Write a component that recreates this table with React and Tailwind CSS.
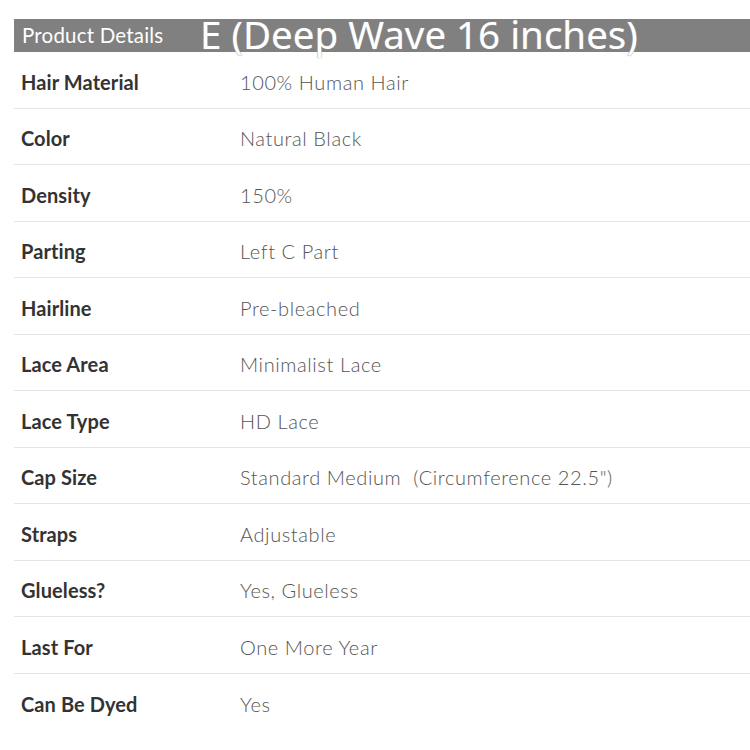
const rows = [
  ["Hair Material", "100% Human Hair"],
  ["Color", "Natural Black"],
  ["Density", "150%"],
  ["Parting", "Left C Part"],
  ["Hairline", "Pre-bleached"],
  ["Lace Area", "Minimalist Lace"],
  ["Lace Type", "HD Lace"],
  ["Cap Size", "Standard Medium\u00a0\u00a0(Circumference 22.5\")"],
  ["Straps", "Adjustable"],
  ["Glueless?", "Yes, Glueless"],
  ["Last For", "One More Year"],
  ["Can Be Dyed", "Yes"],
];

export default function App() {
  return (
    <div className="w-[750px] h-[750px] overflow-hidden bg-white pt-[19px] pl-[14px] font-['Lato',sans-serif]">
      <div className="flex h-[33px] items-center bg-[#808080] text-white">
        <span className="w-[186px] pl-[8px] text-[20.5px] tracking-[0.2px]">Product Details</span>
        <span className="-mt-[3px] whitespace-nowrap font-['Noto_Sans',sans-serif] text-[38.5px] leading-none [text-shadow:0_0_1px_#9a9a9a,0_0_1px_#9a9a9a]">
          E (Deep Wave 16 inches)
        </span>
      </div>
      <div>
        {rows.map(([label, value], i) => (
          <div
            key={label}
            className={`flex h-[56.5px] items-center pt-[4px] ${i < rows.length - 1 ? "border-b border-[#e6e6e6]" : ""}`}
          >
            <span className="w-[226px] pl-[7px] text-[20px] font-bold text-[#333] tracking-[0.1px]">{label}</span>
            <span className="text-[20px] font-light text-[#555] tracking-[0.6px]">{value}</span>
          </div>
        ))}
      </div>
    </div>
  );
}
